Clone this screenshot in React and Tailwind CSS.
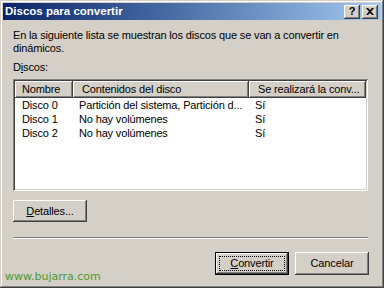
const raised =
  "shadow-[inset_-1px_-1px_#404040,inset_1px_1px_#ffffff,inset_-2px_-2px_#808080]";
const sunken =
  "shadow-[inset_1px_1px_#808080,inset_-1px_-1px_#ffffff,inset_2px_2px_#404040,inset_-2px_-2px_#d4d0c8]";

const rows = [
  { name: "Disco 0", content: "Partición del sistema, Partición d...", conv: "Sí" },
  { name: "Disco 1", content: "No hay volúmenes", conv: "Sí" },
  { name: "Disco 2", content: "No hay volúmenes", conv: "Sí" },
];

const Button = ({ children, isDefault }) => (
  <div
    className={`w-[74px] h-[23px] bg-[#d4d0c8] flex items-center justify-center text-black ${
      isDefault
        ? "shadow-[inset_0_0_0_1px_#000000,inset_-2px_-2px_#404040,inset_2px_2px_#ffffff,inset_-3px_-3px_#808080]"
        : raised
    }`}
  >
    {isDefault ? (
      <span className="border border-dotted border-black px-[10px] leading-[13px]">{children}</span>
    ) : (
      <span className="leading-[13px]">{children}</span>
    )}
  </div>
);

const App = () => {
  return (
    <div
      className="relative w-[384px] h-[288px] bg-[#d4d0c8] p-[3px] text-[11px] tracking-[-0.15px] text-black overflow-hidden shadow-[inset_-1px_-1px_#404040,inset_1px_1px_#d4d0c8,inset_-2px_-2px_#808080,inset_2px_2px_#ffffff]"
      style={{ fontFamily: '"Liberation Sans", Arial, sans-serif' }}
    >
      {/* title bar */}
      <div className="h-[17px] flex items-center justify-between pl-[2px] pr-[3px] bg-gradient-to-r from-[#0a246a] to-[#a6caf0]">
        <span className="text-white font-bold text-[11.5px] tracking-normal leading-none">Discos para convertir</span>
        <div className="flex gap-[2px]">
          <div className={`w-[16px] h-[14px] bg-[#d4d0c8] flex items-center justify-center font-bold text-[11px] leading-none ${raised}`}>?</div>
          <div className={`w-[16px] h-[14px] bg-[#d4d0c8] flex items-center justify-center ${raised}`}>
            <svg width="8" height="7" viewBox="0 0 8 7">
              <path d="M0 0h2l2 2 2-2h2L5 3.5 8 7H6L4 5 2 7H0l3-3.5z" fill="#000" />
            </svg>
          </div>
        </div>
      </div>

      <div className="pl-[10px]">
        <p className="mt-[9px] leading-[13px] w-[345px]">
          En la siguiente lista se muestran los discos que se van a convertir en dinámicos.
        </p>
        <div className="mt-[6px] leading-[13px]">
          D<span className="underline">i</span>scos:
        </div>

        {/* list view */}
        <div className={`mt-[5px] w-[355px] h-[112px] bg-white p-[2px] ${sunken}`}>
          <div className="flex h-[17px] bg-[#d4d0c8]">
            <div className={`w-[58px] flex items-center pl-[7px] ${raised}`}>Nombre</div>
            <div className={`w-[176px] flex items-center pl-[9px] ${raised}`}>Contenidos del disco</div>
            <div className={`w-[117px] flex items-center pl-[9px] whitespace-nowrap ${raised}`}>Se realizará la conv...</div>
          </div>
          {rows.map((r, i) => (
            <div key={i} className="flex h-[14px] items-center leading-[14px]">
              <div className="w-[58px] pl-[7px]">{r.name}</div>
              <div className="w-[176px] pl-[6px] whitespace-nowrap">{r.content}</div>
              <div className="w-[117px] pl-[6px]">{r.conv}</div>
            </div>
          ))}
        </div>

        <div className="mt-[9px]">
          <div className={`w-[74px] h-[22px] bg-[#d4d0c8] flex items-center justify-center ${raised}`}>
            <span>
              <span className="underline">D</span>etalles...
            </span>
          </div>
        </div>

        <div className="mt-[15px] w-[355px] h-[2px] border-t border-[#808080] border-b border-b-white" />

        <div className="mt-[13px] w-[356px] flex justify-end gap-[6px]">
          <Button isDefault>
            <span className="underline">C</span>onvertir
          </Button>
          <Button>Cancelar</Button>
        </div>
      </div>

      <div
        className="absolute left-[5px] top-[270px] text-[11px] tracking-normal text-[#4e9a2c] leading-[13px]"
        style={{ fontFamily: '"DejaVu Sans", Verdana, sans-serif' }}
      >
        www.bujarra.com
      </div>
    </div>
  );
};

export default App;
